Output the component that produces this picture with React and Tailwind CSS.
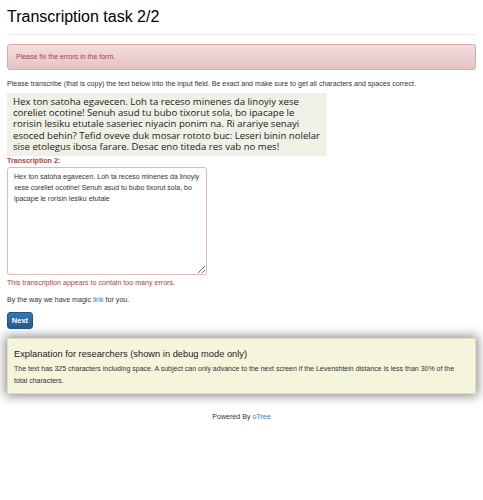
export default function App() {
  return (
    <div className="min-h-[500px] bg-white font-['Liberation_Sans',Arial,sans-serif] text-[#333]">
      <div className="px-[7px] pt-[4px]">
        <h2 className="text-[16px] leading-[26px] text-black">Transcription task 2/2</h2>
        <hr className="mt-[4px] border-[#eee]" />

        <div className="mt-[9px] flex h-[26px] items-center rounded-[3px] border border-[#dca7a7] bg-gradient-to-b from-[#f2dede] to-[#e7c3c3] px-[8px] text-[7px] text-[#a94442]">
          Please fix the errors in the form.
        </div>

        <p className="mt-[9px] text-[7.1px] leading-[11px]">
          Please transcribe (that is copy) the text below into the input field. Be exact and make sure to get all characters and spaces correct.
        </p>

        <div className="mt-[3px] w-[320px] bg-[#eff0e6] px-[6px] pt-[3px] pb-[4px] font-['Open_Sans',sans-serif] text-[9.6px] leading-[11.2px] text-[#222]">
          Hex ton satoha egavecen. Loh ta receso minenes da linoyiy xese coreliet ocotine! Senuh asud tu bubo tixorut sola, bo ipacape le rorisin lesiku etutale saseriec niyacin ponim na. Ri arariye senayi esoced behin? Tefid oveve duk mosar rototo buc: Leseri binin nolelar sise etolegus ibosa farare. Desac eno titeda res vab no mes!
        </div>

        <label className="block text-[7.1px] font-bold leading-[11px] text-[#a94442]">Transcription 2:</label>
        <textarea
          className="block h-[108px] w-[200px] resize-y rounded-[3px] border border-[#e4b9b9] pt-[3px] pr-[2px] pb-[3px] pl-[6px] text-[7px] leading-[11px] text-[#333] outline-none"
          defaultValue="Hex ton satoha egavecen. Loh ta receso minenes da linoyiy xese coreliet ocotine! Senuh asud tu bubo tixorut sola, bo ipacape le rorisin lesiku etutale"
        />
        <p className="mt-[3px] text-[7.1px] leading-[11px] text-[#a94442]">This transcription appears to contain too many errors.</p>

        <p className="mt-[6px] text-[7.1px] leading-[11px]">
          By the way we have magic <a className="text-[#337ab7]">link</a> for you.
        </p>

        <button className="mt-[5px] h-[17px] w-[26px] rounded-[3px] border border-[#245580] bg-gradient-to-b from-[#337ab7] to-[#265a88] text-[7.5px] font-bold text-white">
          Next
        </button>

        <div className="mt-[8px] h-[56px] border border-[#e0e0c0] bg-[#f5f5dc] px-[6px] pt-[9px] shadow-[0_0_10px_2px_rgba(0,0,0,0.45)]">
          <h4 className="text-[9.3px] leading-[13px] text-[#222]">Explanation for researchers (shown in debug mode only)</h4>
          <p className="mt-[2px] text-[7px] leading-[12px]">
            The text has 325 characters including space. A subject can only advance to the next screen if the Levenshtein distance is less than 30% of the total characters.
          </p>
        </div>

        <p className="mt-[18px] text-center text-[7.1px] leading-[11px]">
          Powered By <a className="text-[#337ab7]">oTree</a>
        </p>
      </div>
    </div>
  );
}
